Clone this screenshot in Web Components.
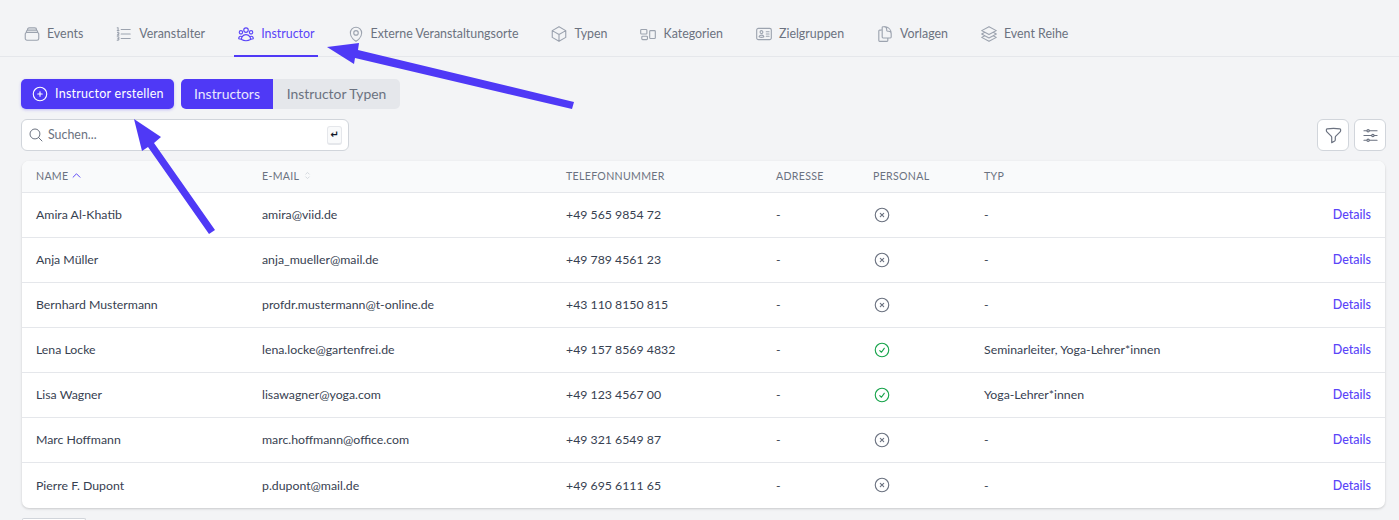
<!DOCTYPE html>
<html lang="de">
<head>
<meta charset="utf-8">
<title>Instructor</title>
<style>
    html, body { margin: 0; height: 520px; overflow: hidden; }
    body { background: #f3f4f6; font-family: "Lato", "Liberation Sans", sans-serif; color: #374151; position: relative; }
</style>
</head>
<body>
<app-tabs>
    <nav-tab icon="stack">Events</nav-tab>
    <nav-tab icon="list">Veranstalter</nav-tab>
    <nav-tab icon="group" active>Instructor</nav-tab>
    <nav-tab icon="pin">Externe Veranstaltungsorte</nav-tab>
    <nav-tab icon="cube">Typen</nav-tab>
    <nav-tab icon="rects">Kategorien</nav-tab>
    <nav-tab icon="id">Zielgruppen</nav-tab>
    <nav-tab icon="docs">Vorlagen</nav-tab>
    <nav-tab icon="layers">Event Reihe</nav-tab>
</app-tabs>
<page-actions></page-actions>
<search-bar></search-bar>
<instructor-table>
    <instructor-row name="Amira Al-Khatib" mail="amira@viid.de" phone="+49 565 9854 72" typ="-"></instructor-row>
    <instructor-row name="Anja Müller" mail="anja_mueller@mail.de" phone="+49 789 4561 23" typ="-"></instructor-row>
    <instructor-row name="Bernhard Mustermann" mail="profdr.mustermann@t-online.de" phone="+43 110 8150 815" typ="-"></instructor-row>
    <instructor-row name="Lena Locke" mail="lena.locke@gartenfrei.de" phone="+49 157 8569 4832" personal typ="Seminarleiter, Yoga-Lehrer*innen"></instructor-row>
    <instructor-row name="Lisa Wagner" mail="lisawagner@yoga.com" phone="+49 123 4567 00" personal typ="Yoga-Lehrer*innen"></instructor-row>
    <instructor-row name="Marc Hoffmann" mail="marc.hoffmann@office.com" phone="+49 321 6549 87" typ="-"></instructor-row>
    <instructor-row name="Pierre F. Dupont" mail="p.dupont@mail.de" phone="+49 695 6111 65" typ="-"></instructor-row>
</instructor-table>
<page-stub></page-stub>
<arrow-overlay></arrow-overlay>

<script>
const ICONS = {
    stack: "M6 6.878V6a2.25 2.25 0 012.25-2.25h7.5A2.25 2.25 0 0118 6v.878m-12 0c.235-.083.487-.128.75-.128h10.5c.263 0 .515.045.75.128m-12 0A2.25 2.25 0 004.5 9v.878m13.5-3A2.25 2.25 0 0119.5 9v.878m0 0a2.246 2.246 0 00-.75-.128H5.25c-.263 0-.515.045-.75.128m15 0A2.25 2.25 0 0121 12v6a2.25 2.25 0 01-2.25 2.25H5.25A2.25 2.25 0 013 18v-6c0-.98.626-1.813 1.5-2.122",
    list: "M8.242 5.992h12m-12 6.003H20.24m-12 5.999h12M4.117 7.495v-3.75H2.99m1.125 3.75H2.99m1.125 0H5.24m-1.92 2.577a1.125 1.125 0 1 1 1.591 1.59l-1.83 1.83h2.16M2.99 15.745h1.125a1.125 1.125 0 0 1 0 2.25H3.74m0-.002h.375a1.125 1.125 0 0 1 0 2.25H2.99",
    group: "M18 18.72a9.094 9.094 0 003.741-.479 3 3 0 00-4.682-2.72m.94 3.198l.001.031c0 .225-.012.447-.037.666A11.944 11.944 0 0112 21c-2.17 0-4.207-.576-5.963-1.584A6.062 6.062 0 016 18.719m12 0a5.971 5.971 0 00-.941-3.197m0 0A5.995 5.995 0 0012 12.75a5.995 5.995 0 00-5.058 2.772m0 0a3 3 0 00-4.681 2.72 8.986 8.986 0 003.74.477m.94-3.197a5.971 5.971 0 00-.94 3.197M15 6.75a3 3 0 11-6 0 3 3 0 016 0zm6 3a2.25 2.25 0 11-4.5 0 2.25 2.25 0 014.5 0zm-13.5 0a2.25 2.25 0 11-4.5 0 2.25 2.25 0 014.5 0z",
    pin: "M15 10.5a3 3 0 11-6 0 3 3 0 016 0z M19.5 10.5c0 7.142-7.5 11.25-7.5 11.25S4.5 17.642 4.5 10.5a7.5 7.5 0 1115 0z",
    cube: "M21 7.5l-9-5.25L3 7.5m18 0l-9 5.25m9-5.25v9l-9 5.25M3 7.5l9 5.25M3 7.5v9l9 5.25m0-9v9",
    rects: "M2.25 7.125C2.25 6.504 2.754 6 3.375 6h6c.621 0 1.125.504 1.125 1.125v3.75c0 .621-.504 1.125-1.125 1.125h-6a1.125 1.125 0 01-1.125-1.125v-3.75zM14.25 8.625c0-.621.504-1.125 1.125-1.125h5.25c.621 0 1.125.504 1.125 1.125v8.25c0 .621-.504 1.125-1.125 1.125h-5.25a1.125 1.125 0 01-1.125-1.125v-8.25zM3.75 16.125c0-.621.504-1.125 1.125-1.125h5.25c.621 0 1.125.504 1.125 1.125v2.25c0 .621-.504 1.125-1.125 1.125h-5.25a1.125 1.125 0 01-1.125-1.125v-2.25z",
    id: "M15 9h3.75M15 12h3.75M15 15h3.75M4.5 19.5h15a2.25 2.25 0 002.25-2.25V6.75A2.25 2.25 0 0019.5 4.5h-15a2.25 2.25 0 00-2.25 2.25v10.5A2.25 2.25 0 004.5 19.5zm6-10.125a1.875 1.875 0 11-3.75 0 1.875 1.875 0 013.75 0zm1.294 6.336a6.721 6.721 0 01-3.17.789 6.721 6.721 0 01-3.168-.789 3.376 3.376 0 016.338 0z",
    docs: "M15.75 17.25v3.375c0 .621-.504 1.125-1.125 1.125h-9.75a1.125 1.125 0 01-1.125-1.125V7.875c0-.621.504-1.125 1.125-1.125H6.75a9.06 9.06 0 011.5.124m7.5 10.376h3.375c.621 0 1.125-.504 1.125-1.125V11.25c0-4.46-3.243-8.161-7.5-8.876a9.06 9.06 0 00-1.5-.124H9.375c-.621 0-1.125.504-1.125 1.125v3.5m7.5 10.375H9.375a1.125 1.125 0 01-1.125-1.125v-9.25m12 6.625v-1.875a3.375 3.375 0 00-3.375-3.375h-1.5a1.125 1.125 0 01-1.125-1.125v-1.5a3.375 3.375 0 00-3.375-3.375H9.75",
    layers: "M6.429 9.75L2.25 12l4.179 2.25m0-4.5l5.571 3 5.571-3m-11.142 0L2.25 7.5 12 2.25l9.75 5.25-4.179 2.25m0 0L21.75 12l-4.179 2.25m0 0l4.179 2.25L12 21.75 2.25 16.5l4.179-2.25m11.142 0l-5.571 3-5.571-3",
    plus: "M12 9v6m3-3H9m12 0a9 9 0 11-18 0 9 9 0 0118 0z",
    search: "M21 21l-5.197-5.197m0 0A7.5 7.5 0 105.196 5.196a7.5 7.5 0 0010.607 10.607z",
    funnel: "M12 3c2.755 0 5.455.232 8.083.678.533.09.917.556.917 1.096v1.044a2.25 2.25 0 01-.659 1.591l-5.432 5.432a2.25 2.25 0 00-.659 1.591v2.927a2.25 2.25 0 01-1.244 2.013L9.75 21v-6.568a2.25 2.25 0 00-.659-1.591L3.659 7.409A2.25 2.25 0 013 5.818V4.774c0-.54.384-1.006.917-1.096A48.32 48.32 0 0112 3z",
    sliders: "M10.5 6h9.75M10.5 6a1.5 1.5 0 11-3 0m3 0a1.5 1.5 0 10-3 0M3.75 6H7.5m3 12h9.75m-9.75 0a1.5 1.5 0 01-3 0m3 0a1.5 1.5 0 00-3 0m-3.75 0H7.5m9-6h3.75m-3.75 0a1.5 1.5 0 01-3 0m3 0a1.5 1.5 0 00-3 0m-9.75 0h9.75",
    no: "M9.75 9.75l4.5 4.5m0-4.5l-4.5 4.5M21 12a9 9 0 11-18 0 9 9 0 0118 0z",
    yes: "M9 12.75L11.25 15 15 9.75M21 12a9 9 0 11-18 0 9 9 0 0118 0z",
    up: "M4.5 15.75l7.5-7.5 7.5 7.5",
    updown: "M8.25 15L12 18.75 15.75 15m-7.5-6L12 5.25 15.75 9"
};

const svg = (name, size, width = 1.5) =>
    `<svg xmlns="http://www.w3.org/2000/svg" width="${size}" height="${size}" viewBox="0 0 24 24" fill="none" stroke="currentColor" stroke-width="${width}" stroke-linecap="round" stroke-linejoin="round"><path d="${ICONS[name]}"/></svg>`;

const FONT = `"Lato", "Liberation Sans", sans-serif`;
const COLS = "226px 304px 210px 97px 111px 1fr auto";

class AppTabs extends HTMLElement {
    constructor() {
        super();
        this.attachShadow({mode: "open"}).innerHTML = `
        <style>
            :host {
                display: flex;
                gap: 26px;
                height: 56px;
                padding-left: 20px;
                border-bottom: 1px solid #e5e7eb;
            }
        </style>
        <slot></slot>`;
    }
}
customElements.define("app-tabs", AppTabs);

class NavTab extends HTMLElement {
    constructor() {
        super();
        this.attachShadow({mode: "open"}).innerHTML = `
        <style>
            :host {
                display: flex;
                align-items: center;
                gap: 6px;
                padding: 10px 3px 0;
                height: 47px;
                font: 12.4px/18px ${FONT};
                color: #6b7280;
            }
            :host([active]) { color: #5a45f8; box-shadow: inset 0 -2px 0 #4f39f6; }
            svg { display: block; color: #9ca3af; }
            :host([active]) svg { color: #5a45f8; }
        </style>
        ${svg(this.getAttribute("icon"), 18)}
        <slot></slot>`;
    }
}
customElements.define("nav-tab", NavTab);

class PageActions extends HTMLElement {
    constructor() {
        super();
        this.attachShadow({mode: "open"}).innerHTML = `
        <style>
            :host { display: flex; gap: 7px; padding: 22px 0 0 21px; height: 30px; font-family: ${FONT}; }
            .create {
                display: flex;
                align-items: center;
                gap: 6px;
                width: 153px;
                box-sizing: border-box;
                padding: 0 0 1px 10px;
                color: #fff;
                font-size: 12.5px;
                letter-spacing: .25px;
                background: #4f39f6;
                border-radius: 5px;
                box-shadow: 0 1px 3px rgba(79, 57, 246, .3);
            }
            .seg { display: flex; border-radius: 5px; overflow: hidden; font-size: 13.9px; line-height: 29px; }
            .seg span { display: block; text-align: center; }
            .on { width: 92px; background: #4f39f6; color: #e8e6fe; }
            .off { width: 127px; background: #e5e7eb; color: #6b7280; }
            svg { display: block; }
        </style>
        <div class="create">${svg("plus", 18)}<span>Instructor erstellen</span></div>
        <div class="seg"><span class="on">Instructors</span><span class="off">Instructor Typen</span></div>`;
    }
}
customElements.define("page-actions", PageActions);

class SearchBar extends HTMLElement {
    constructor() {
        super();
        this.attachShadow({mode: "open"}).innerHTML = `
        <style>
            :host { display: flex; justify-content: space-between; padding: 10px 13px 0 21px; height: 32px; font-family: ${FONT}; }
            .box {
                display: flex;
                align-items: center;
                width: 328px;
                box-sizing: border-box;
                padding: 0 6px 0 6px;
                gap: 4px;
                background: #fff;
                border: 1px solid #d1d5db;
                border-radius: 6px;
                color: #6b7280;
                font-size: 12.4px;
            }
            .box span { flex: 1; padding-bottom: 1px; }
            .box svg { color: #6b7280; }
            .key {
                width: 15px;
                height: 19px;
                display: flex;
                align-items: center;
                justify-content: center;
                box-sizing: border-box;
                background: #f9fafb;
                border: 1px solid #e5e7eb;
                border-bottom-width: 2px;
                border-radius: 3px;
                color: #111827;
                font-size: 10px;
                font-weight: bold;
                font-family: "DejaVu Sans", sans-serif;
                flex: none;
            }
            .tools { display: flex; gap: 5px; }
            .tool {
                width: 32px;
                height: 32px;
                display: flex;
                align-items: center;
                justify-content: center;
                box-sizing: border-box;
                background: #fff;
                border: 1px solid #d1d5db;
                border-radius: 6px;
                color: #6b7280;
            }
        </style>
        <div class="box">${svg("search", 16)}<span>Suchen...</span><div class="key">↵</div></div>
        <div class="tools"><div class="tool">${svg("funnel", 19)}</div><div class="tool">${svg("sliders", 19)}</div></div>`;
    }
}
customElements.define("search-bar", SearchBar);

class InstructorTable extends HTMLElement {
    constructor() {
        super();
        this.attachShadow({mode: "open"}).innerHTML = `
        <style>
            :host {
                display: block;
                margin: 10px 14px 0 22px;
                background: #fff;
                border-radius: 7px;
                overflow: hidden;
                box-shadow: 0 1px 3px rgba(0, 0, 0, .12), 0 1px 2px rgba(0, 0, 0, .06);
                font-family: ${FONT};
            }
            .head {
                display: grid;
                grid-template-columns: ${COLS};
                align-items: center;
                height: 29px;
                padding: 0 14px 2px;
                background: #f9fafb;
                color: #6b7280;
                font-size: 10.6px;
                letter-spacing: .3px;
                text-transform: uppercase;
                border-bottom: 1px solid #e5e7eb;
            }
            .sort { display: flex; align-items: center; gap: 3px; }
            .sort svg { display: block; }
            .asc { color: #4f39f6; }
            .none { color: #d1d5db; }
        </style>
        <div class="head">
            <div class="sort">Name<span class="asc">${svg("up", 11, 2)}</span></div>
            <div class="sort">E-Mail<span class="none">${svg("updown", 11, 2)}</span></div>
            <div>Telefonnummer</div>
            <div>Adresse</div>
            <div>Personal</div>
            <div>Typ</div>
        </div>
        <slot></slot>`;
    }
}
customElements.define("instructor-table", InstructorTable);

class InstructorRow extends HTMLElement {
    connectedCallback() {
        if (this.shadowRoot) return;
        const yes = this.hasAttribute("personal");
        this.attachShadow({mode: "open"}).innerHTML = `
        <style>
            :host {
                display: grid;
                grid-template-columns: ${COLS};
                align-items: center;
                height: 43px;
                padding: 0 14px 1px;
                font-size: 12.3px;
                color: #374151;
                border-bottom: 1px solid #e5e7eb;
                font-family: ${FONT};
            }
            :host(:last-child) { border-bottom: 0; height: 44px; }
            a { color: #5a45f8; text-decoration: none; font-weight: 500; font-size: 12.5px; }
            .yes { color: #16a34a; }
            .no { color: #6b7280; }
            svg { display: block; }
        </style>
        <div>${this.getAttribute("name")}</div>
        <div>${this.getAttribute("mail")}</div>
        <div>${this.getAttribute("phone")}</div>
        <div>-</div>
        <div class="${yes ? "yes" : "no"}">${svg(yes ? "yes" : "no", 18)}</div>
        <div>${this.getAttribute("typ")}</div>
        <a href="#">Details</a>`;
    }
}
customElements.define("instructor-row", InstructorRow);

class PageStub extends HTMLElement {
    constructor() {
        super();
        this.attachShadow({mode: "open"}).innerHTML = `
        <style>
            :host { display: block; margin: 10px 0 0 22px; width: 64px; height: 2px; box-sizing: border-box; background: #fff; border: 1px solid #d1d5db; border-bottom: 0; border-radius: 5px 5px 0 0; }
        </style>`;
    }
}
customElements.define("page-stub", PageStub);

// arrows lie over the page, so this one is positioned
class ArrowOverlay extends HTMLElement {
    constructor() {
        super();
        this.attachShadow({mode: "open"}).innerHTML = `
        <style>
            :host { position: absolute; left: 0; top: 0; width: 1399px; height: 520px; pointer-events: none; }
        </style>
        <svg xmlns="http://www.w3.org/2000/svg" width="1399" height="520" fill="#4f39f6">
            <polygon points="327,47 359,43 358,50 574,102 572,109 355,58 354,64"/>
            <polygon points="134,119 161,137 154,143 215,230 209,234 148,147 142,151"/>
        </svg>`;
    }
}
customElements.define("arrow-overlay", ArrowOverlay);
</script>
</body>
</html>
